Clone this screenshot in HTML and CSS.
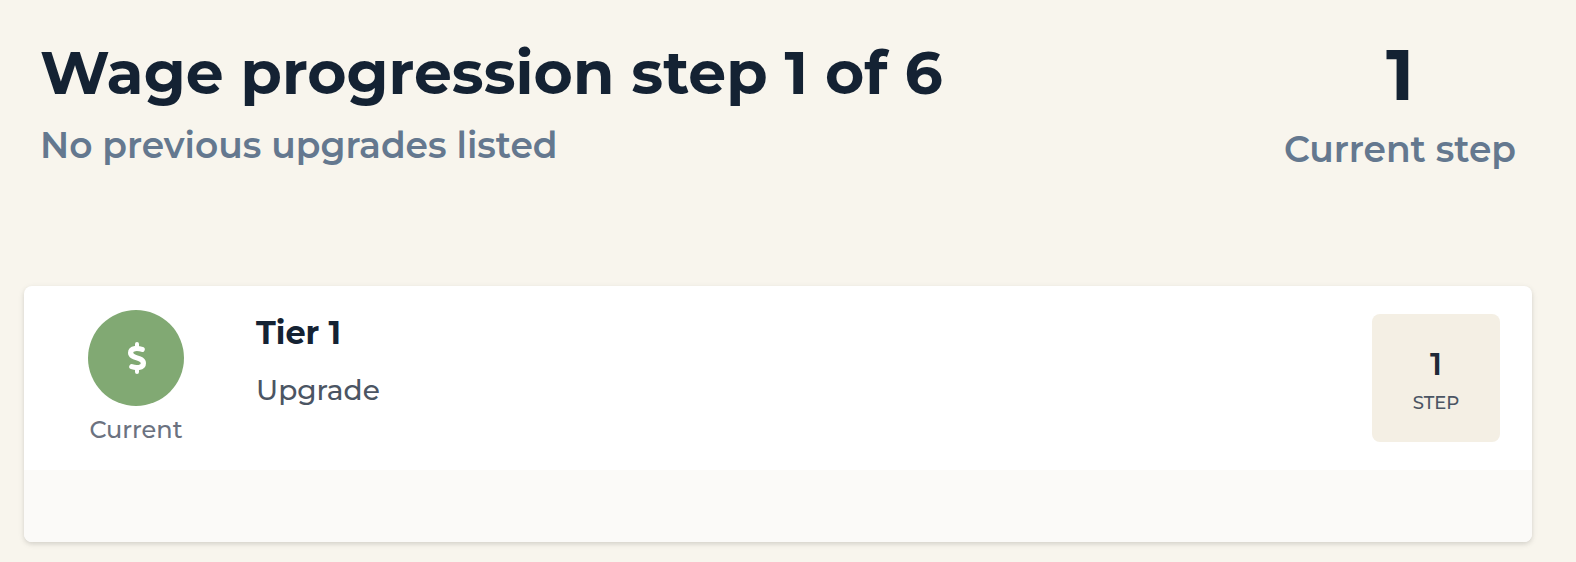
FILE: index.html
```html
<!DOCTYPE html>
<html lang="en">
<head>
    <meta charset="UTF-8">
    <meta name="viewport" content="width=device-width, initial-scale=1.0">
    <title>Wage progression</title>
    <link rel="stylesheet" href="styles.css">
</head>
<body>
    <header class="header">
        <div class="heading">
            <h1 class="title">Wage progression step 1 of 6</h1>
            <p class="subtitle">No previous upgrades listed</p>
        </div>
        <div class="current-step">
            <span class="current-number">1</span>
            <span class="current-label">Current step</span>
        </div>
    </header>
    <section class="card">
        <div class="tier">
            <div class="status">
                <div class="status-circle">
                    <svg class="dollar" viewBox="0 0 18 32" fill="none" stroke="#fff" stroke-width="5.2" stroke-linecap="round" stroke-linejoin="round">
                        <path d="M9 2v4M9 26v4" stroke-width="4"/>
                        <path d="M14.2 7.4C10.5 6.2 2.6 5.4 2.6 10.8c0 6.2 12.8 4 12.8 10.5 0 5.2-8 4.8-11.6 3.4"/>
                    </svg>
                </div>
                <span class="status-label">Current</span>
            </div>
            <div class="details">
                <h2 class="tier-name">Tier 1</h2>
                <p class="tier-type">Upgrade</p>
            </div>
            <div class="step-box">
                <span class="step-number">1</span>
                <span class="step-label">STEP</span>
            </div>
        </div>
        <div class="card-footer"></div>
    </section>
</body>
</html>
```
FILE: styles.css
```css
*
{
  margin: 0;
  padding: 0;
  box-sizing: border-box;
}
body{
  height: 562px;
  padding: 0 44px 0 24px;
  overflow: hidden;
  font-family: Montserrat, Inter, sans-serif;
  background-color: #f8f5ed;
}
.header{
  display: flex;
  justify-content: space-between;
  height: 286px;
  padding: 38px 16px 0;
}
.title{
  font-size: 60px;
  line-height: 70px;
  font-weight: 700;
  color: #142233;
  white-space: nowrap;
}
.subtitle{
  margin-top: 17px;
  font-size: 36px;
  line-height: 40px;
  font-weight: 600;
  color: #64788f;
}
.current-step{
  display: flex;
  flex-direction: column;
  align-items: center;
}
.current-number{
  font-size: 72px;
  line-height: 72px;
  font-weight: 700;
  color: #142233;
}
.current-label{
  margin-top: 19px;
  font-size: 36px;
  line-height: 40px;
  font-weight: 600;
  color: #64788f;
}
.card{
  height: 256px;
  border-radius: 8px;
  overflow: hidden;
  background: #fff;
  box-shadow: 0 2px 6px 0 rgba(0, 0, 0, 0.1),
  0 2px 4px 0 rgba(0, 0, 0, 0.06);
}
.tier{
  display: flex;
  height: 184px;
  padding: 24px 32px 0 64px;
}
.status{
  display: flex;
  flex-direction: column;
  align-items: center;
  width: 96px;
}
.status-circle{
  display: flex;
  justify-content: center;
  align-items: center;
  width: 96px;
  height: 96px;
  border-radius: 50%;
  background: #81a973;
}
.dollar{
  width: 18px;
  height: 32px;
  margin-left: 2px;
}
.status-label{
  margin-top: 8px;
  font-size: 24px;
  line-height: 32px;
  font-weight: 500;
  color: #6b7280;
}
.details{
  flex: 1;
  padding-left: 72px;
}
.tier-name{
  margin-top: 3px;
  font-size: 32px;
  line-height: 40px;
  font-weight: 700;
  color: #142233;
}
.tier-type{
  margin-top: 17px;
  font-size: 28px;
  line-height: 40px;
  font-weight: 500;
  color: #4b5563;
}
.step-box{
  display: flex;
  flex-direction: column;
  align-items: center;
  width: 128px;
  height: 128px;
  margin-top: 4px;
  padding-top: 30px;
  border-radius: 8px;
  background: #f4efe4;
}
.step-number{
  font-size: 32px;
  line-height: 40px;
  font-weight: 600;
  color: #1f2937;
}
.step-label{
  margin-top: 8px;
  font-size: 18px;
  line-height: 22px;
  font-weight: 500;
  color: #4b5563;
}
.card-footer{
  height: 72px;
  background: #fbfaf8;
}
```
